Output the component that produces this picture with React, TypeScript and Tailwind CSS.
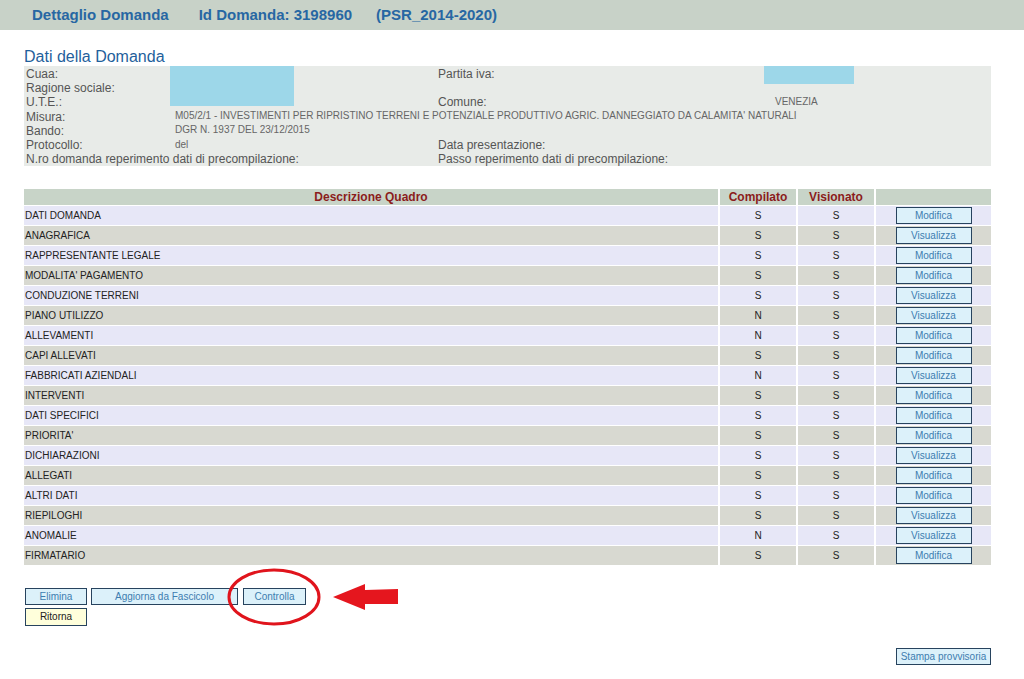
import React from "react";

const rows: [string, string, string, "Modifica" | "Visualizza"][] = [
  ["DATI DOMANDA", "S", "S", "Modifica"],
  ["ANAGRAFICA", "S", "S", "Visualizza"],
  ["RAPPRESENTANTE LEGALE", "S", "S", "Modifica"],
  ["MODALITA' PAGAMENTO", "S", "S", "Modifica"],
  ["CONDUZIONE TERRENI", "S", "S", "Visualizza"],
  ["PIANO UTILIZZO", "N", "S", "Visualizza"],
  ["ALLEVAMENTI", "N", "S", "Modifica"],
  ["CAPI ALLEVATI", "S", "S", "Modifica"],
  ["FABBRICATI AZIENDALI", "N", "S", "Visualizza"],
  ["INTERVENTI", "S", "S", "Modifica"],
  ["DATI SPECIFICI", "S", "S", "Modifica"],
  ["PRIORITA'", "S", "S", "Modifica"],
  ["DICHIARAZIONI", "S", "S", "Visualizza"],
  ["ALLEGATI", "S", "S", "Modifica"],
  ["ALTRI DATI", "S", "S", "Modifica"],
  ["RIEPILOGHI", "S", "S", "Visualizza"],
  ["ANOMALIE", "N", "S", "Visualizza"],
  ["FIRMATARIO", "S", "S", "Modifica"],
];

const btn =
  "flex items-center justify-center h-[17px] border border-[#27435e] bg-[#dcf1fa] text-[10px] leading-none text-[#3d7db0]";

function Lbl({ children, span }: { children?: React.ReactNode; span?: string }) {
  return (
    <div className={`text-[12px] leading-[14px] text-[#555] whitespace-nowrap ${span ?? ""}`}>{children}</div>
  );
}
function Val({ children, span }: { children?: React.ReactNode; span?: string }) {
  return (
    <div className={`text-[10px] leading-[12px] text-[#666] whitespace-nowrap -mt-[1px] ${span ?? ""}`}>{children}</div>
  );
}

export default function App() {
  return (
    <div
      className="relative w-[1024px] min-h-[679px] bg-white"
      style={{ fontFamily: '"Liberation Sans", Arial, sans-serif' }}
    >
      {/* top bar */}
      <div className="h-[30px] bg-[#c8d2c8] flex items-center pl-[32px] text-[15px] font-bold text-[#2767a3]">
        <span>Dettaglio Domanda</span>
        <span className="ml-[30px]">Id Domanda: 3198960</span>
        <span className="ml-[24px]">(PSR_2014-2020)</span>
      </div>

      <div className="pl-[24px] w-[991px]">
        <div className="pt-[18px] h-[36px] text-[16px] leading-[18px] text-[#1f5f9c]">Dati della Domanda</div>

        {/* info box */}
        <div className="relative bg-[#e8ebe8] h-[100px] pt-[1px] pl-[2px]">
          <div className="grid grid-cols-[149px_263px_337px_1fr] auto-rows-[14.2px] items-center">
            <Lbl>Cuaa:</Lbl>
            <Val />
            <Lbl>Partita iva:</Lbl>
            <Val />

            <Lbl>Ragione sociale:</Lbl>
            <Val />
            <Lbl />
            <Val />

            <Lbl>U.T.E.:</Lbl>
            <Val />
            <Lbl>Comune:</Lbl>
            <Val>VENEZIA</Val>

            <Lbl>Misura:</Lbl>
            <Val span="col-span-3">
              M05/2/1 - INVESTIMENTI PER RIPRISTINO TERRENI E POTENZIALE PRODUTTIVO AGRIC. DANNEGGIATO DA CALAMITA' NATURALI
            </Val>

            <Lbl>Bando:</Lbl>
            <Val span="col-span-3">DGR N. 1937 DEL 23/12/2015</Val>

            <Lbl>Protocollo:</Lbl>
            <Val>del</Val>
            <Lbl>Data presentazione:</Lbl>
            <Val />

            <Lbl span="col-span-2">N.ro domanda reperimento dati di precompilazione:</Lbl>
            <Lbl span="col-span-2">Passo reperimento dati di precompilazione:</Lbl>
          </div>
          {/* redaction overlays */}
          <div className="absolute left-[146px] top-0 w-[124px] h-[40px] bg-[#9dd7e9]" />
          <div className="absolute left-[740px] top-0 w-[90px] h-[18px] bg-[#9dd7e9]" />
        </div>

        {/* table */}
        <div className="mt-[23px] flex flex-col gap-[1px]">
          <div className="flex gap-[2px] h-[16px] text-[12px] font-bold text-[#8b1c1c] leading-[16px]">
            <div className="w-[694px] bg-[#c8d4c8] text-center">Descrizione Quadro</div>
            <div className="w-[76px] bg-[#c8d4c8] text-center">Compilato</div>
            <div className="w-[76px] bg-[#c8d4c8] text-center">Visionato</div>
            <div className="w-[115px] bg-[#c8d4c8]" />
          </div>
          {rows.map(([name, c, v, action], i) => {
            const bg = i % 2 === 0 ? "bg-[#e7e7f7]" : "bg-[#d8d9d1]";
            return (
              <div key={name} className="flex gap-[2px] h-[19px] text-[10px] text-[#222] leading-[19px]">
                <div className={`w-[694px] pl-[1px] ${bg}`}>{name}</div>
                <div className={`w-[76px] text-center ${bg}`}>{c}</div>
                <div className={`w-[76px] text-center ${bg}`}>{v}</div>
                <div className={`w-[115px] flex items-center justify-center ${bg}`}>
                  <div className={`${btn} w-[76px]`}>{action}</div>
                </div>
              </div>
            );
          })}
        </div>

        {/* bottom buttons */}
        <div className="mt-[23px] pl-[1px] flex flex-col gap-[3px]">
          <div className="flex gap-[4px]">
            <div className={`${btn} w-[62px] h-[17px]`}>Elimina</div>
            <div className={`${btn} w-[147px] h-[17px]`}>Aggiorna da Fascicolo</div>
            <div className={`${btn} w-[63px] h-[17px] ml-[1px]`}>Controlla</div>
          </div>
          <div className="flex">
            <div className="flex items-center justify-center h-[18px] w-[62px] border border-[#27435e] bg-[#ffffdb] text-[10px] leading-none text-[#222]">
              Ritorna
            </div>
          </div>
        </div>

        <div className="mt-[22px] flex justify-end">
          <div className={`${btn} w-[95px] text-[#1f5f8c]`}>Stampa provvisoria</div>
        </div>
      </div>

      {/* annotations */}
      <svg className="absolute left-0 top-0 pointer-events-none" width="1024" height="679">
        <ellipse cx="274" cy="597" rx="45" ry="27" fill="none" stroke="#e0141c" strokeWidth="3" />
        <polygon points="333,597 365,584 365,590 398,589 398,604 365,604 365,610" fill="#e5161e" />
      </svg>
    </div>
  );
}
